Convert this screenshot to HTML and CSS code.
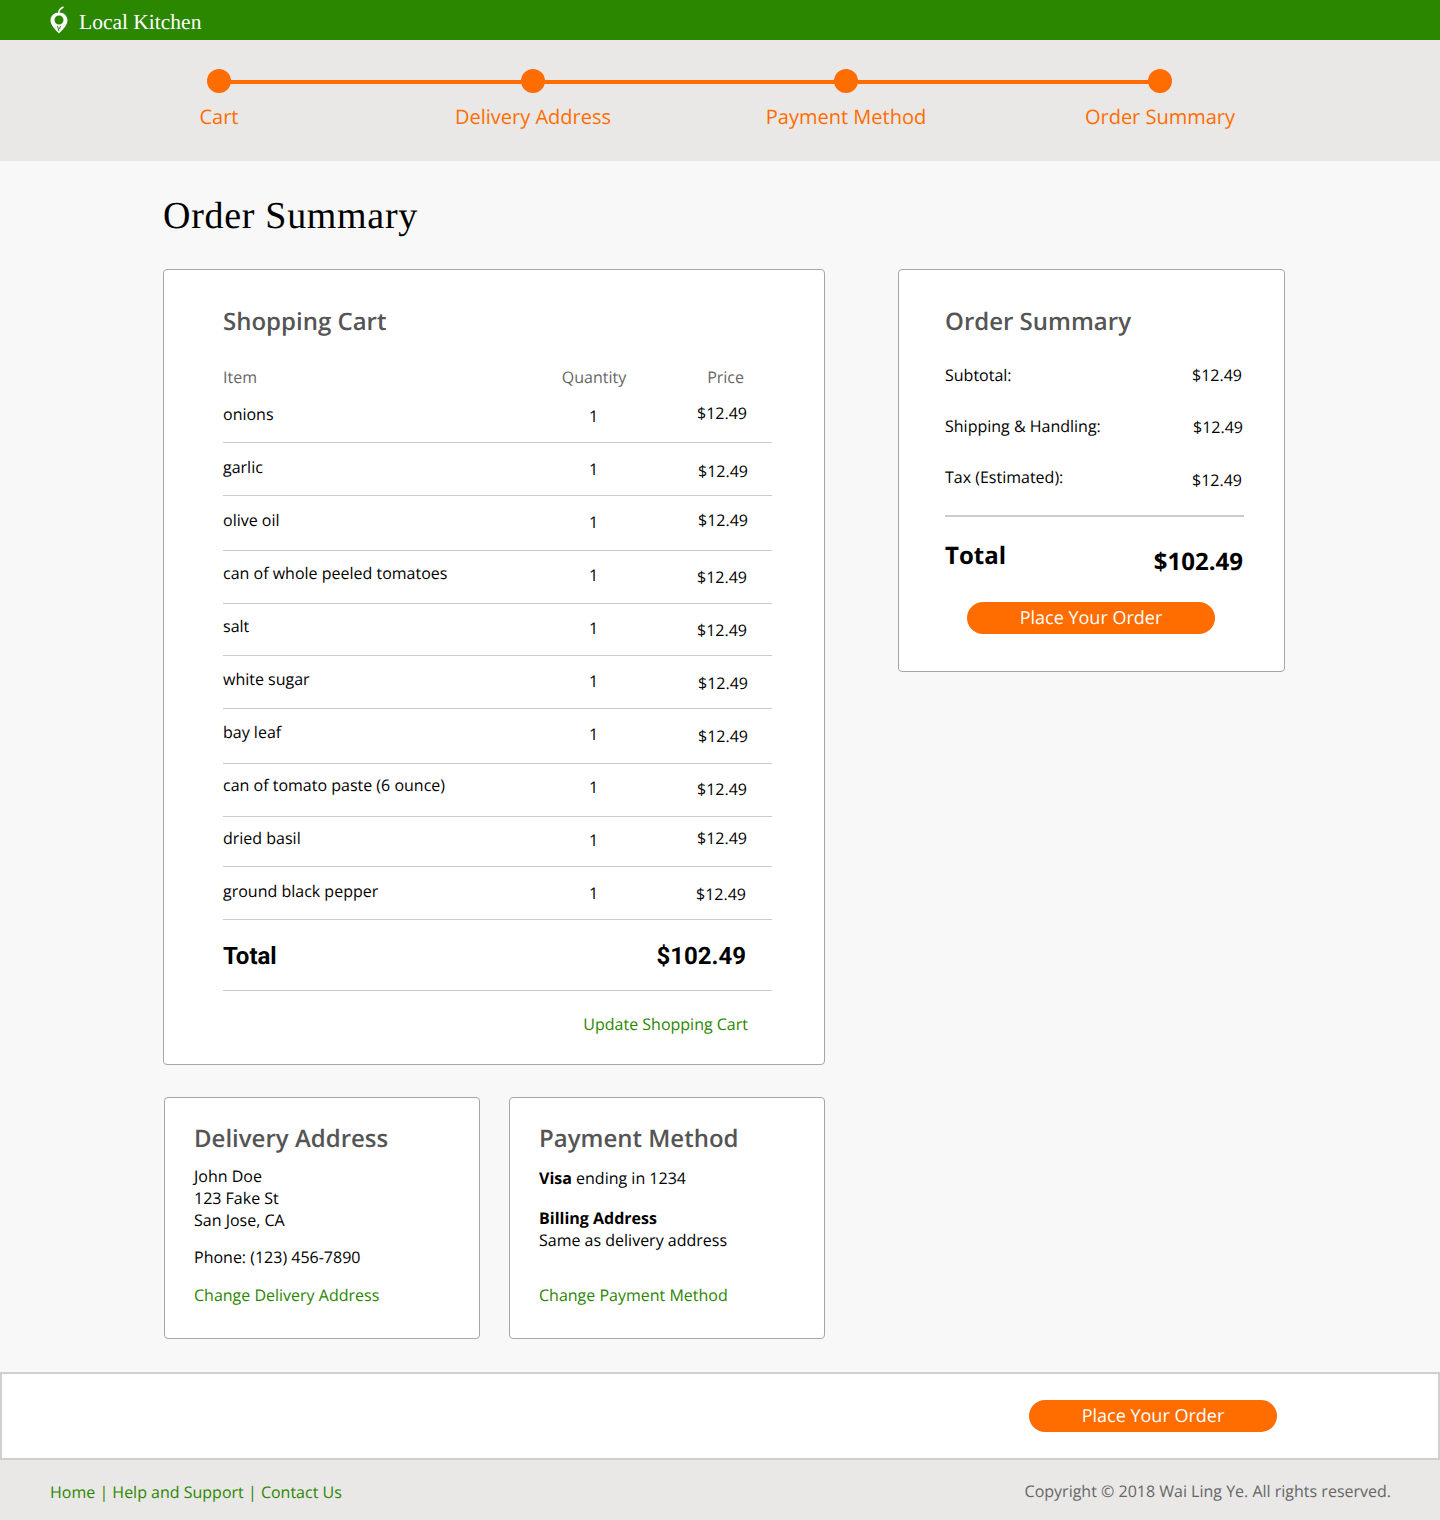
FILE: index.html
```html
<!DOCTYPE html>
<html lang="en">
<head>
<meta charset="utf-8">
<title>Order Summary</title>
<link rel="stylesheet" href="styles.css">
</head>
<body>
<header class="topbar">
  <svg class="logo" width="20" height="28" viewBox="0 0 20 28"><path fill="#fff" fill-rule="evenodd" d="M10 6.500C5 6.500 1.500 10 1.500 14.500c0 4.500 5 9.500 8.500 13C13.500 24 18.500 19 18.500 14.500 18.500 10 15 6.500 10 6.500Zm0 3a4.500 4.500 0 1 1 0 9 4.500 4.500 0 0 1 0-9Z"/><path fill="none" stroke="#fff" stroke-width="1.500" d="M9.500 8C9.500 5 11 2.500 14.500 1"/><path fill="none" stroke="#2b8600" stroke-width="1" d="M8.500 20l1.500 5M11.500 20l-1 3"/></svg>
  <span class="brand">Local Kitchen</span>
</header>
<nav class="steps">
  <div class="track">
    <div class="step"><span class="dot"></span><span class="label">Cart</span></div>
    <div class="step"><span class="dot"></span><span class="label">Delivery Address</span></div>
    <div class="step"><span class="dot"></span><span class="label">Payment Method</span></div>
    <div class="step"><span class="dot"></span><span class="label">Order Summary</span></div>
  </div>
</nav>
<main class="content">
  <h1 class="title">Order Summary</h1>
  <div class="columns">
    <div class="left">
      <section class="card cart">
        <h2 class="card-title">Shopping Cart</h2>
        <div class="table">
          <div class="head"><span>Item</span><span class="qty">Quantity</span><span class="price">Price</span></div>
          <div class="row"><span class="item">onions</span><span class="qty">1</span><span class="price">$12.49</span></div>
          <div class="row"><span class="item">garlic</span><span class="qty">1</span><span class="price">$12.49</span></div>
          <div class="row"><span class="item">olive oil</span><span class="qty">1</span><span class="price">$12.49</span></div>
          <div class="row"><span class="item">can of whole peeled tomatoes</span><span class="qty">1</span><span class="price">$12.49</span></div>
          <div class="row"><span class="item">salt</span><span class="qty">1</span><span class="price">$12.49</span></div>
          <div class="row"><span class="item">white sugar</span><span class="qty">1</span><span class="price">$12.49</span></div>
          <div class="row"><span class="item">bay leaf</span><span class="qty">1</span><span class="price">$12.49</span></div>
          <div class="row"><span class="item">can of tomato paste (6 ounce)</span><span class="qty">1</span><span class="price">$12.49</span></div>
          <div class="row"><span class="item">dried basil</span><span class="qty">1</span><span class="price">$12.49</span></div>
          <div class="row"><span class="item">ground black pepper</span><span class="qty">1</span><span class="price">$12.49</span></div>
          <div class="cart-total"><span>Total</span><span>$102.49</span></div>
        </div>
        <a class="link update">Update Shopping Cart</a>
      </section>
      <div class="pair">
        <section class="card small">
          <h2 class="card-title">Delivery Address</h2>
          <p class="addr">John Doe<br>123 Fake St<br>San Jose, CA</p>
          <p class="phone">Phone: (123) 456-7890</p>
          <a class="link">Change Delivery Address</a>
        </section>
        <section class="card small">
          <h2 class="card-title">Payment Method</h2>
          <p class="visa"><b>Visa</b> ending in 1234</p>
          <p class="billing"><b>Billing Address</b><br>Same as delivery address</p>
          <a class="link">Change Payment Method</a>
        </section>
      </div>
    </div>
    <aside class="card summary">
      <h2 class="card-title">Order Summary</h2>
      <div class="sum-row r1"><span>Subtotal:</span><span>$12.49</span></div>
      <div class="sum-row r2"><span>Shipping &amp; Handling:</span><span class="v">$12.49</span></div>
      <div class="sum-row r3"><span>Tax (Estimated):</span><span class="v">$12.49</span></div>
      <div class="sum-total"><span class="st-label">Total</span><span class="st-value">$102.49</span></div>
      <button class="btn">Place Your Order</button>
    </aside>
  </div>
</main>
<div class="action-bar"><button class="btn">Place Your Order</button></div>
<footer class="footer">
  <div class="foot-links"><a class="link">Home</a> | <a class="link">Help and Support</a> | <a class="link">Contact Us</a></div>
  <div class="copy">Copyright © 2018 Wai Ling Ye. All rights reserved.</div>
</footer>
</body>
</html>
```
FILE: styles.css
```css
* { box-sizing: border-box; }
html, body { margin: 0; padding: 0; }
body { width: 1440px; height: 1520px; background: #f8f8f8; font-family: "Open Sans", sans-serif; font-size: 16px; line-height: 22px; color: #000; overflow: hidden; text-rendering: geometricPrecision; }

.topbar { height: 40px; background: #2b8600; display: flex; align-items: center; padding-left: 49px; gap: 10px; }
.logo { display: block; }
.brand { font-family: "Liberation Serif", serif; font-size: 21.5px; color: #fff; padding-top: 4px; }

.steps { height: 121px; background: #e9e8e6; padding-top: 29px; }
.track { position: relative; display: grid; grid-template-columns: 314px 314px 312px 316px; margin-left: 62px; width: 1256px; }
.track::before { content: ""; position: absolute; left: 157px; width: 941px; top: 11px; height: 4px; background: #ff6d00; }
.step { display: flex; flex-direction: column; align-items: center; position: relative; }
.dot { width: 24px; height: 24px; border-radius: 50%; background: #ff6d00; }
.label { margin-top: 10px; font-size: 20px; line-height: 27px; color: #ff6d00; }

.content { padding: 0 0 0 163px; height: 1211px; }
.title { margin: 0; padding-top: 30px; height: 108px; font-family: "Liberation Serif", serif; font-weight: 400; font-size: 38px; letter-spacing: .7px; line-height: 50px; }
.columns { display: flex; gap: 73px; align-items: flex-start; }
.left { width: 662px; }
.card { background: #fff; border: 1px solid #a6a6a6; border-radius: 4px; }
.card-title { margin: 0; font-size: 24px; font-weight: 600; line-height: 33px; color: #555; }

.cart { height: 796px; padding: 35px 52px 0 59px; }
.table { margin-top: 28px; }
.head, .row { display: grid; grid-template-columns: 339px 64px 1fr; }
.head { font-size: 16px; color: #666; height: 37px; }
.head .qty { margin-left: -32px; text-align: center; width: 128px; }
.head .price { text-align: right; padding-right: 28px; }
.row { border-bottom: 1px solid #ccc; height: 53px; --item: 13px; --price: 17px; --pr: 25px; }
.row .item { padding-top: var(--item); }
.row .qty { text-align: center; padding-top: calc(var(--item) + 2px); margin-left: -1px; }
.row .price { text-align: right; padding-top: var(--price); padding-right: var(--pr); }
.row:nth-child(2) { height: 40px; --item: 0px; --price: 0px; }
.row:nth-child(2) .price { margin-top: -1px; }
.row:nth-child(3) { --price: 17px; --pr: 24px; }
.row:nth-child(4) { height: 55px; --price: 13px; --pr: 24px; }
.row:nth-child(5) { --item: 11px; --price: 15px; }
.row:nth-child(6) { height: 52px; --item: 11px; --price: 15px; }
.row:nth-child(7) { --item: 12px; --price: 16px; --pr: 24px; }
.row:nth-child(8) { height: 55px; --item: 12px; --price: 16px; --pr: 24px; }
.row:nth-child(9) { --item: 10px; --price: 14px; }
.row:nth-child(10) { height: 50px; --item: 10px; --price: 10px; }
.row:nth-child(11) { --item: 13px; --price: 16px; --pr: 26px; }
.cart-total { display: flex; justify-content: space-between; height: 71px; border-bottom: 1px solid #ccc; padding: 21px 26px 0 0; font-family: Roboto, sans-serif; font-weight: 700; font-size: 24px; line-height: 30px; }
.update { display: block; text-align: right; margin-top: 22px; padding-right: 24px; }
.link { color: #2b8600; }

.pair { display: flex; gap: 29px; margin-top: 32px; margin-left: 1px; }
.small { width: 316px; height: 242px; padding: 24px 29px 0; }
.small p { margin: 0; }
.small .addr { margin-top: 10px; }
.small .phone { margin-top: 15px; }
.small .visa { margin-top: 12px; }
.small .billing { margin-top: 18px; }
.small .link { display: block; margin-top: 16px; }
.small .billing + .link { margin-top: 33px; }

.summary { width: 387px; height: 403px; padding: 35px 40px 0 46px; }
.sum-row { display: flex; justify-content: space-between; align-items: flex-start; }
.r1 { margin-top: 26px; padding-right: 2px; }
.r2 { margin-top: 29px; padding-right: 1px; }
.r2 .v { margin-top: 1px; }
.r3 { margin-top: 28px; padding-right: 2px; }
.r3 .v { margin-top: 3px; }
.sum-total { margin-top: 24px; border-top: 2px solid #ccc; display: flex; justify-content: space-between; padding: 22px 1px 0 0; }
.st-label { font-size: 24px; font-weight: 700; line-height: 33px; }
.st-value { font-size: 24px; font-weight: 700; line-height: 33px; margin-top: 6px; }
.btn { display: block; width: 248px; height: 32px; border: 0; border-radius: 16px; background: #ff6d00; color: #fff; font-family: "Open Sans", sans-serif; font-size: 18px; padding: 0 0 1px; text-rendering: geometricPrecision; }
.summary .btn { margin: 24px 0 0 22px; }

.action-bar { height: 88px; background: #fff; border: 2px solid #d0d0d0; padding: 26px 0 0 1027px; }
.footer { height: 60px; background: #e9e8e6; display: flex; justify-content: space-between; padding: 21px 49px 0 50px; color: #2b8600; }
.copy { color: #666; margin-top: -1px; }
```
